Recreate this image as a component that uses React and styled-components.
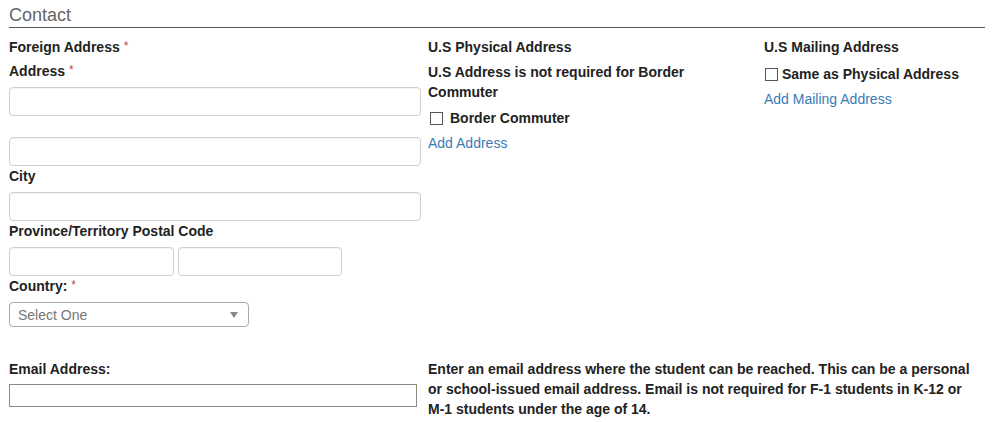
import React from "react";
import styled, { createGlobalStyle } from "styled-components";

const Global = createGlobalStyle`
  html, body { margin: 0; padding: 0; background: #fff; }
  body { font-family: "Liberation Sans", Arial, sans-serif; color: #222; }
  * { box-sizing: border-box; }
`;

const Page = styled.div`
  padding: 0 7px 0 9px;
`;

const SectionTitle = styled.h2`
  margin: 0;
  padding-top: 3px;
  font-size: 18px;
  line-height: 24px;
  font-weight: normal;
  color: #666;
  border-bottom: 1px solid #555;
`;

const TopGrid = styled.div`
  display: grid;
  grid-template-columns: 419px 336px 1fr;
  padding-top: 9px;
`;

const Column = styled.div`
  display: flex;
  flex-direction: column;
  align-items: flex-start;
`;

const Label = styled.div`
  font-size: 14px;
  line-height: 20px;
  height: ${(p) => (p.$oneLine ? "20px" : "auto")};
  font-weight: bold;
  margin-top: ${(p) => p.$mt || 0}px;
  max-width: ${(p) => (p.$maxw ? p.$maxw + "px" : "none")};
`;

const Req = styled.span`
  color: #b94a48;
  font-size: 12px;
  line-height: 1;
  font-weight: normal;
  margin-left: 4px;
  vertical-align: top;
  position: relative;
  top: 3px;
`;

const TextInput = styled.input`
  display: block;
  width: ${(p) => p.$w}px;
  height: 29px;
  margin: ${(p) => p.$mt || 6}px 0 0 0;
  padding: 4px 8px;
  border: 1px solid #cfcfcf;
  border-radius: 4px;
  box-shadow: inset 0 1px 1px rgba(0, 0, 0, 0.05);
  font: 14px "Liberation Sans", Arial, sans-serif;
  background: #fff;
`;

const InputPair = styled.div`
  display: flex;
  gap: 4px;
`;

const SelectBox = styled.div`
  margin-top: 6px;
  width: 240px;
  height: 25px;
  border: 1px solid #aaa;
  border-radius: 4px;
  display: flex;
  align-items: center;
  justify-content: space-between;
  padding: 0 10px 0 8px;
  font-size: 14px;
  color: #777;
  background: #fff;
`;

const Caret = styled.span`
  width: 0;
  height: 0;
  border-left: 4px solid transparent;
  border-right: 4px solid transparent;
  border-top: 6px solid #888;
  margin-top: 1px;
`;

const CheckRow = styled.label`
  display: flex;
  align-items: center;
  margin-top: ${(p) => p.$mt}px;
  font-size: 14px;
  line-height: 20px;
  font-weight: bold;
`;

const Check = styled.input.attrs({ type: "checkbox" })`
  appearance: none;
  -webkit-appearance: none;
  width: 13px;
  height: 13px;
  margin: 0 ${(p) => p.$gap}px 0 ${(p) => p.$ml}px;
  border: 1px solid #555;
  background: #fff;
  flex: none;
`;

const Link = styled.a`
  margin-top: 5px;
  font-size: 14px;
  line-height: 20px;
  color: #3a7bb5;
  text-decoration: none;
`;

const EmailGrid = styled.div`
  display: grid;
  grid-template-columns: 419px 1fr;
  margin-top: 32px;
`;

const EmailInput = styled.input`
  display: block;
  width: 408px;
  height: 23px;
  margin-top: 5px;
  border: 1px solid #8a8a8a;
  border-radius: 0;
  font: 14px "Liberation Sans", Arial, sans-serif;
  background: #fff;
`;

const HelpText = styled.p`
  margin: 0;
  max-width: 552px;
  font-size: 14px;
  line-height: 20px;
  font-weight: bold;
`;

export default function App() {
  return (
    <>
      <Global />
      <Page>
        <SectionTitle>Contact</SectionTitle>
        <TopGrid>
          <Column>
            <Label $oneLine>
              Foreign Address<Req>*</Req>
            </Label>
            <Label $oneLine $mt={4}>
              Address<Req>*</Req>
            </Label>
            <TextInput $w={412} />
            <TextInput $w={412} $mt={21} />
            <Label $oneLine>City</Label>
            <TextInput $w={412} />
            <Label $oneLine>Province/Territory Postal Code</Label>
            <InputPair>
              <TextInput $w={165} />
              <TextInput $w={164} />
            </InputPair>
            <Label $oneLine>
              Country:<Req>*</Req>
            </Label>
            <SelectBox>
              <span>Select One</span>
              <Caret />
            </SelectBox>
          </Column>
          <Column>
            <Label $oneLine>U.S Physical Address</Label>
            <Label $mt={5} $maxw={300}>
              U.S Address is not required for Border Commuter
            </Label>
            <CheckRow $mt={6}>
              <Check $ml={2} $gap={7} />
              Border Commuter
            </CheckRow>
            <Link href="#">Add Address</Link>
          </Column>
          <Column>
            <Label $oneLine>U.S Mailing Address</Label>
            <CheckRow $mt={7}>
              <Check $ml={1} $gap={4} />
              Same as Physical Address
            </CheckRow>
            <Link href="#">Add Mailing Address</Link>
          </Column>
        </TopGrid>
        <EmailGrid>
          <div>
            <Label $oneLine>Email Address:</Label>
            <EmailInput />
          </div>
          <HelpText>
            Enter an email address where the student can be reached. This can
            be a personal or school-issued email address. Email is not required
            for F-1 students in K-12 or M-1 students under the age of 14.
          </HelpText>
        </EmailGrid>
      </Page>
    </>
  );
}
